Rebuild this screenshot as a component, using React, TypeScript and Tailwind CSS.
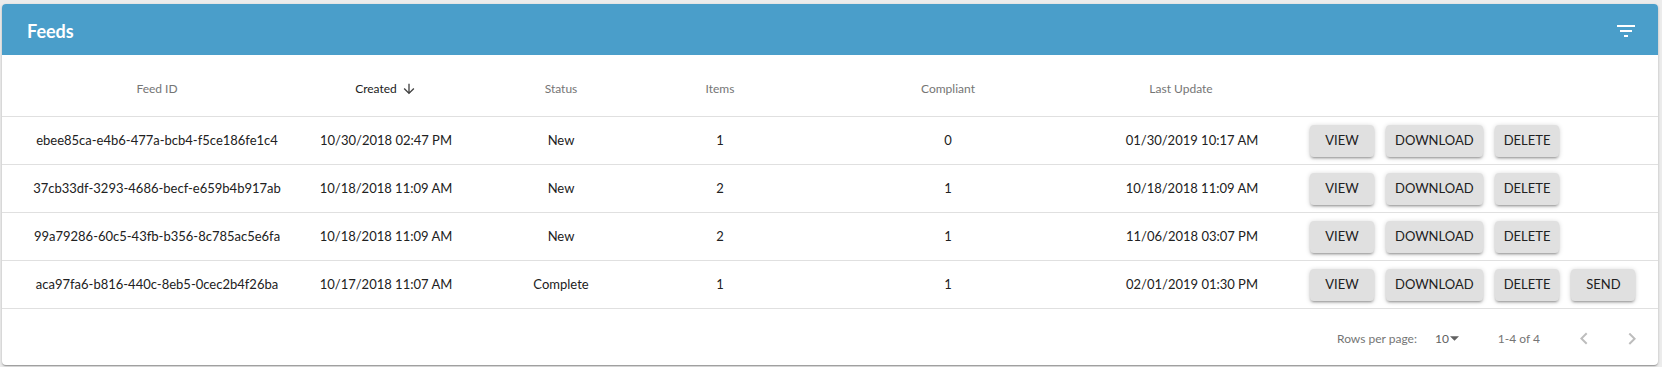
import React from "react";

const COLS = "grid grid-cols-[310px_148px_202px_116px_340px_148px_1fr]";

const feeds = [
  { id: "ebee85ca-e4b6-477a-bcb4-f5ce186fe1c4", created: "10/30/2018 02:47 PM", status: "New", items: 1, compliant: 0, updated: "01/30/2019 10:17 AM", send: false },
  { id: "37cb33df-3293-4686-becf-e659b4b917ab", created: "10/18/2018 11:09 AM", status: "New", items: 2, compliant: 1, updated: "10/18/2018 11:09 AM", send: false },
  { id: "99a79286-60c5-43fb-b356-8c785ac5e6fa", created: "10/18/2018 11:09 AM", status: "New", items: 2, compliant: 1, updated: "11/06/2018 03:07 PM", send: false },
  { id: "aca97fa6-b816-440c-8eb5-0cec2b4f26ba", created: "10/17/2018 11:07 AM", status: "Complete", items: 1, compliant: 1, updated: "02/01/2019 01:30 PM", send: true },
];

function ActionButton({ label }: { label: string }) {
  return (
    <button className="h-[32px] min-w-[64px] px-[9px] rounded bg-[#e0e0e0] text-[13px] text-[#212121] uppercase shadow-[0px_1px_5px_0px_rgba(0,0,0,0.2),0px_2px_2px_0px_rgba(0,0,0,0.14),0px_3px_1px_-2px_rgba(0,0,0,0.12)]">
      {label}
    </button>
  );
}

function Chevron({ dir }: { dir: "left" | "right" }) {
  return (
    <div className="w-12 h-12 flex items-center justify-center">
      <svg className="w-6 h-6" viewBox="0 0 24 24" fill="rgba(0,0,0,0.26)">
        {dir === "left"
          ? <path d="M15.41 16.09l-4.58-4.59 4.58-4.59L14 5.5l-6 6 6 6z" />
          : <path d="M8.59 16.34l4.58-4.59-4.58-4.58L10 5.75l6 6-6 6z" />}
      </svg>
    </div>
  );
}

export default function App() {
  return (
    <div className="min-h-screen bg-[#ececec] pt-1 pl-[2px] pr-1 font-['Lato',sans-serif]">
      <div className="bg-white rounded overflow-hidden shadow-[0px_1px_3px_0px_rgba(0,0,0,0.2),0px_1px_1px_0px_rgba(0,0,0,0.14),0px_2px_1px_-1px_rgba(0,0,0,0.12)]">
        {/* Title bar */}
        <div className="h-[51px] bg-[#4a9eca] flex items-center justify-between pl-[25px] pr-[20px] pt-[3px]">
          <h1 className="text-white text-[18px] font-bold">Feeds</h1>
          <svg className="w-6 h-6" viewBox="0 0 24 24" fill="#ffffff">
            <path d="M10 18h4v-2h-4v2zM3 6v2h18V6H3zm3 7h12v-2H6v2z" />
          </svg>
        </div>

        {/* Column headers */}
        <div className={`${COLS} h-[62px] border-b border-[#e0e0e0] text-[12px] text-[#757575] items-center pt-[6px] text-center`}>
          <div>Feed ID</div>
          <div className="flex items-center justify-center text-[#212121]">
            Created
            <svg className="w-4 h-4 ml-1" viewBox="0 0 24 24" fill="#424242">
              <path d="M20 12l-1.41-1.41L13 16.17V4h-2v12.17l-5.58-5.59L4 12l8 8 8-8z" />
            </svg>
          </div>
          <div>Status</div>
          <div>Items</div>
          <div>Compliant</div>
          <div className="whitespace-nowrap pr-[22px]">Last Update</div>
          <div />
        </div>

        {/* Rows */}
        {feeds.map((f) => (
          <div key={f.id} className={`${COLS} h-[48px] border-b border-[#e0e0e0] text-[13px] text-[#212121] items-center text-center`}>
            <div className="whitespace-nowrap">{f.id}</div>
            <div className="whitespace-nowrap">{f.created}</div>
            <div>{f.status}</div>
            <div>{f.items}</div>
            <div>{f.compliant}</div>
            <div className="whitespace-nowrap">{f.updated}</div>
            <div className="flex items-center gap-3 pl-[44px]">
              <ActionButton label="View" />
              <ActionButton label="Download" />
              <ActionButton label="Delete" />
              {f.send && <ActionButton label="Send" />}
            </div>
          </div>
        ))}

        {/* Pagination */}
        <div className="h-[56px] flex items-center justify-end pr-[2px] pt-[3px] text-[12px] text-[#757575]">
          <span>Rows per page:</span>
          <span className="ml-[18px] flex items-center text-[#616161]">
            10
            <svg className="w-[9px] h-[5px] ml-[1px]" viewBox="0 0 10 5" fill="#616161">
              <path d="M0 0l5 5 5-5z" />
            </svg>
          </span>
          <span className="ml-[39px]">1-4 of 4</span>
          <div className="flex items-center ml-5">
            <Chevron dir="left" />
            <Chevron dir="right" />
          </div>
        </div>
      </div>
    </div>
  );
}
